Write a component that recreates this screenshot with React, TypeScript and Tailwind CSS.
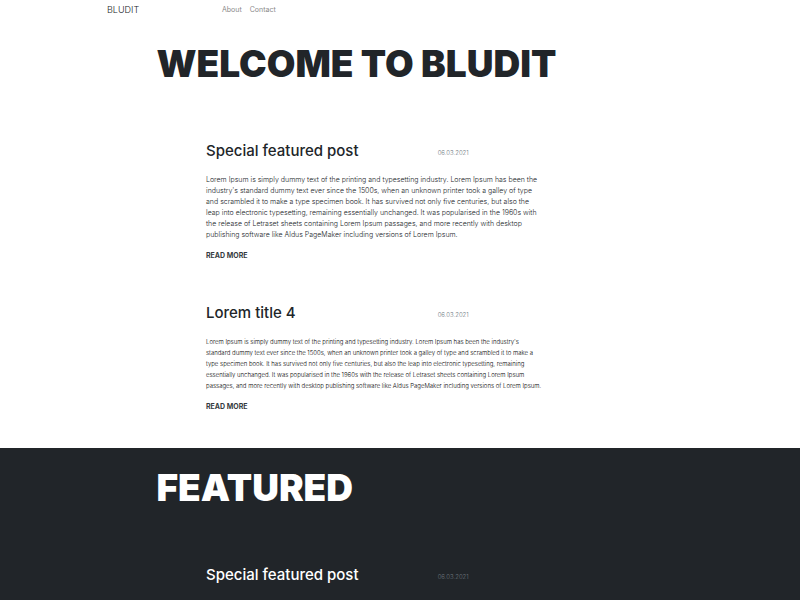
import React from 'react';

type PostProps = {
  title: string;
  date: string;
  lines: string[];
  compact?: boolean;
  dark?: boolean;
};

const featuredLines = [
  'Lorem Ipsum is simply dummy text of the printing and typesetting industry. Lorem Ipsum has been the',
  "industry's standard dummy text ever since the 1500s, when an unknown printer took a galley of type",
  'and scrambled it to make a type specimen book. It has survived not only five centuries, but also the',
  'leap into electronic typesetting, remaining essentially unchanged. It was popularised in the 1960s with',
  'the release of Letraset sheets containing Lorem Ipsum passages, and more recently with desktop',
  'publishing software like Aldus PageMaker including versions of Lorem Ipsum.',
];

const loremLines = [
  "Lorem Ipsum is simply dummy text of the printing and typesetting industry. Lorem Ipsum has been the industry's",
  'standard dummy text ever since the 1500s, when an unknown printer took a galley of type and scrambled it to make a',
  'type specimen book. It has survived not only five centuries, but also the leap into electronic typesetting, remaining',
  'essentially unchanged. It was popularised in the 1960s with the release of Letraset sheets containing Lorem Ipsum',
  'passages, and more recently with desktop publishing software like Aldus PageMaker including versions of Lorem Ipsum.',
];

function Post({ title, date, lines, compact, dark }: PostProps) {
  return (
    <article className="col-span-7 col-start-3 px-1">
      <header className="grid grid-cols-3 items-center">
        <h2 className="col-span-2 whitespace-nowrap text-[15px] leading-5 font-medium">{title}</h2>
        <time className="pt-1 pl-1.5 text-[6px] leading-4 font-light text-[#6c757d]">{date}</time>
      </header>
      <p
        className={`mt-[13px] whitespace-nowrap leading-[11px] font-light ${
          compact ? 'text-[6px]' : 'text-[7px]'
        } ${dark ? 'text-[#8a9096]' : compact ? 'text-black' : 'text-[#212529]'}`}
      >
        {lines.map((line) => (
          <React.Fragment key={line}>
            {line}
            <br />
          </React.Fragment>
        ))}
      </p>
      <a href="#post" className="mt-2 block text-[7px] leading-4 font-bold text-[#343a40]">
        READ MORE
      </a>
    </article>
  );
}

export default function App() {
  return (
    <div className="bg-white font-[Inter,'Liberation_Sans',sans-serif] text-[#212529]">
      <nav className="mx-auto flex h-5 max-w-[594px] items-center px-1">
        <a href="#home" className="w-[115px] text-[9px] leading-4 font-light">BLUDIT</a>
        <div className="flex gap-2 text-[7px] leading-4 text-[#8a8a8a]">
          <a href="#about">About</a>
          <a href="#contact">Contact</a>
        </div>
      </nav>
      <main className="mx-auto grid max-w-[594px] grid-cols-12 pt-6 pb-[33px]">
        <h1 className="col-span-11 col-start-2 mb-[57px] px-1 text-[37px] leading-10 font-black whitespace-nowrap">
          WELCOME TO BLUDIT
        </h1>
        <Post title="Special featured post" date="06.03.2021" lines={featuredLines} />
        <div className="col-span-12 h-[39px]" />
        <Post title="Lorem title 4" date="06.03.2021" lines={loremLines} compact />
      </main>
      <section className="bg-[#212529] text-white">
        <div className="mx-auto grid max-w-[594px] grid-cols-12 pt-5 pb-8">
          <h2 className="col-span-11 col-start-2 mb-[57px] px-1 text-[37px] leading-10 font-black whitespace-nowrap">
            FEATURED
          </h2>
          <Post title="Special featured post" date="06.03.2021" lines={featuredLines} dark />
        </div>
      </section>
    </div>
  );
}
